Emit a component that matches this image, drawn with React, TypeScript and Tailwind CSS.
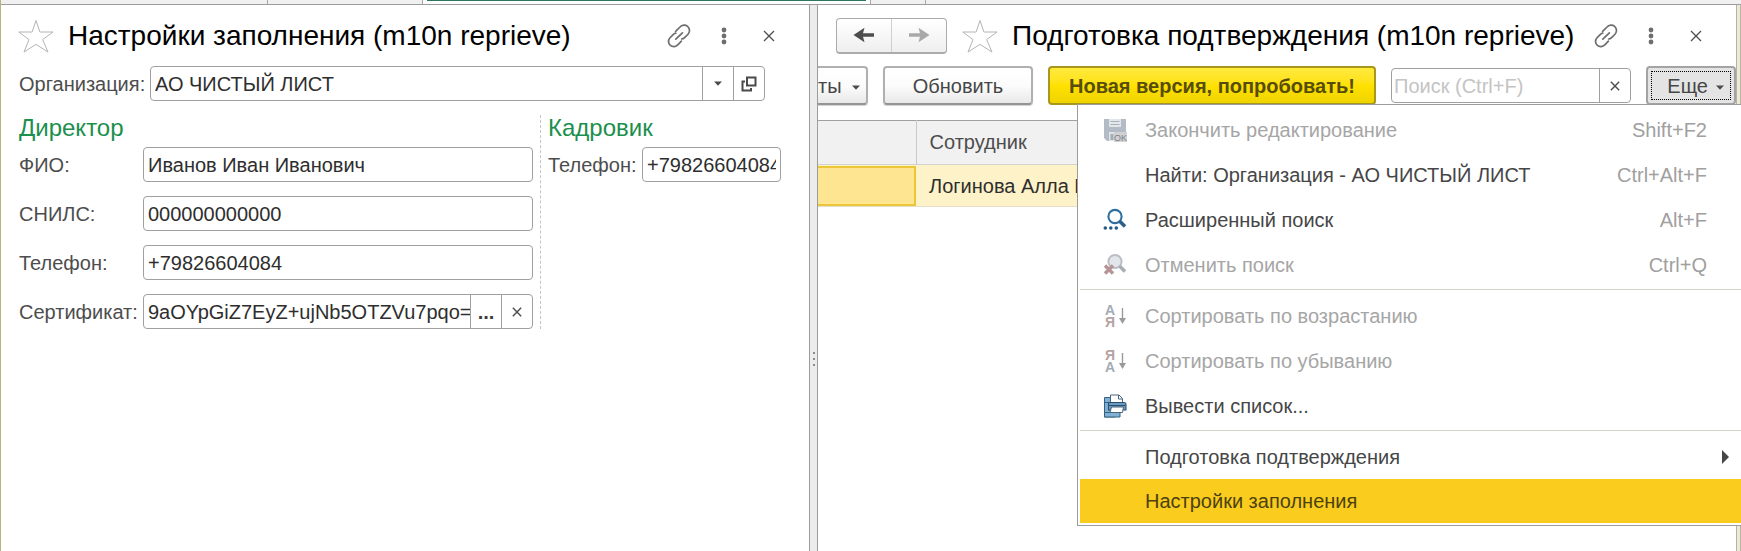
import { useState, type ReactNode } from "react";

const StarIcon = () => (
  <svg className="h-9 w-9 flex-none" viewBox="0 0 36 36" fill="none" stroke="#b4b4b4" strokeWidth="1">
    <path d="M18 2.5 L21.9 14 H35 L24.6 21.6 L30 34 L18 26.4 L6 34 L11 21.6 L0.8 14 H14.1 Z" />
  </svg>
);

const LinkIcon = () => (
  <svg className="h-6 w-6" viewBox="0 0 24 24" fill="none" stroke="#6e6e6e" strokeWidth="1.7" strokeLinecap="round">
    <path d="M8.6 7.4 L13 3 A4.9 4.9 0 0 1 21.2 10 L17.6 13.6 A4.9 4.9 0 0 1 14.6 15" />
    <path d="M14.4 17.2 L10.8 20.8 A4.9 4.9 0 0 1 2.8 14 L6.4 10.4 A4.9 4.9 0 0 1 8.8 9.2" />
    <path d="M8.8 15.2 L15.4 8.8" />
  </svg>
);

const DotsIcon = () => (
  <svg className="h-5 w-5" viewBox="0 0 20 20" fill="#6e6e6e">
    <circle cx="10" cy="4" r="2.4" />
    <circle cx="10" cy="10" r="2.4" />
    <circle cx="10" cy="16" r="2.4" />
  </svg>
);

const CrossIcon = ({ size }: { size: "sm" | "md" }) => (
  <svg
    className={size === "md" ? "h-3 w-3" : "h-[10px] w-[10px]"}
    viewBox="0 0 12 12"
    fill="none"
    stroke="#4d4d4d"
    strokeWidth={size === "md" ? 1.3 : 1.7}
  >
    <path d="M1 1 L11 11 M11 1 L1 11" />
  </svg>
);

const CaretDown = () => (
  <svg className="h-[5px] w-2" viewBox="0 0 8 5" fill="#4a4a4a">
    <path d="M0 0.5 H8 L4 4.8 Z" />
  </svg>
);

const OpenIcon = () => (
  <svg className="h-4 w-4" viewBox="0 0 16 16" fill="none" stroke="#4a4a4a" strokeWidth="2">
    <rect x="6" y="1.5" width="8.5" height="8" />
    <path d="M4 5.5 H1.5 V14.5 H10 V12" />
  </svg>
);

const ArrowIcon = ({ forward }: { forward?: boolean }) => (
  <svg className="h-4 w-[22px]" viewBox="0 0 22 16">
    {forward ? (
      <path d="M1 6.2 H12 L10.5 0.8 L21.5 8 L10.5 15.2 L12 9.8 H1 Z" fill="#a9a9a9" />
    ) : (
      <path d="M21 6.2 H10 L11.5 0.8 L0.5 8 L11.5 15.2 L10 9.8 H21 Z" fill="#4d4d4d" />
    )}
  </svg>
);

const SaveOkIcon = () => (
  <svg className="h-6 w-6 overflow-visible" viewBox="0 0 24 24">
    <path d="M1 1 H23 V23 H4 L1 20 Z" fill="#b3bcc6" />
    <rect x="6" y="1" width="12" height="8" fill="#e3e7ea" />
    <path d="M7.5 3.5 H16.5 M7.5 6.5 H16.5" stroke="#a9b2bb" strokeWidth="1" />
    <rect x="6" y="14" width="7" height="9" fill="#dfe3e6" />
    <rect x="7.5" y="16" width="3" height="6" fill="#a4adb6" />
    <rect x="11" y="14" width="13" height="10" fill="#cfd1d3" />
    <text x="11" y="22.5" fontSize="9" fontFamily="Liberation Sans, sans-serif" fill="#7d8287">OK</text>
  </svg>
);

const SearchDotsIcon = () => (
  <svg className="h-6 w-6" viewBox="0 0 24 24" fill="none">
    <circle cx="12" cy="8.5" r="6.6" stroke="#2f6f9f" strokeWidth="2.1" />
    <path d="M16.5 13 L22 18.5" stroke="#2c5f88" strokeWidth="3.6" />
    <g fill="#235a85">
      <circle cx="2.3" cy="20" r="1.8" />
      <circle cx="7.8" cy="20" r="1.8" />
      <circle cx="13.3" cy="20" r="1.8" />
    </g>
  </svg>
);

const SearchCancelIcon = () => (
  <svg className="h-6 w-6" viewBox="0 0 24 24" fill="none">
    <circle cx="12" cy="8.5" r="6.6" fill="#e2e5e9" stroke="#b9bec5" strokeWidth="2" />
    <path d="M16.5 13 L22 18.5" stroke="#a9aeb4" strokeWidth="3.6" />
    <path d="M2 12.5 L10 20.5 M10 12.5 L2 20.5" stroke="#b49494" strokeWidth="3.4" />
  </svg>
);

const SortIcon = ({ top, bottom }: { top: string; bottom: string }) => (
  <svg className="h-6 w-6 overflow-visible" viewBox="0 0 24 24">
    <g fontFamily="Liberation Sans, sans-serif" fontSize="14" fontWeight="700">
      <text x="2" y="11" fill={top === "А" ? "#a3abb3" : "#b5a3a3"}>{top}</text>
      <text x="2" y="23" fill={bottom === "А" ? "#a3abb3" : "#b5a3a3"}>{bottom}</text>
    </g>
    <path d="M19.5 4 V16" stroke="#9a9a9a" strokeWidth="1.4" />
    <path d="M16 14 H23 L19.5 20 Z" fill="#9a9a9a" />
  </svg>
);

const PrintIcon = () => (
  <svg className="h-6 w-6" viewBox="0 0 24 24" strokeLinejoin="round">
    <path d="M1.5 3.5 H12 V23 H1.5 Z" fill="#7fb0d6" stroke="#35607f" strokeWidth="1" />
    <path d="M1.5 18.5 H17 V23 H1.5 Z" fill="#7fb0d6" stroke="#35607f" strokeWidth="1" />
    <path d="M2 8.5 H6" stroke="#35607f" strokeWidth="1" />
    <path d="M7.5 1 H16 L19.5 4.5 V10 H7.5 Z" fill="#fff" stroke="#4a6478" strokeWidth="1" />
    <path d="M15.5 1 V5 H19.5" fill="none" stroke="#4a6478" strokeWidth="1" />
    <path d="M5.5 8.5 H21 Q23 8.5 23 10.5 V16 H5.5 Z" fill="#6b9cc4" stroke="#2a5070" strokeWidth="1.1" />
    <path d="M6 11.5 H22.5" stroke="#2a5070" strokeWidth="1" />
    <path d="M8.5 13 H20.5 L19.5 18.5 H7 Z" fill="#fff" stroke="#4a6478" strokeWidth="1" />
  </svg>
);

const buttonFace =
  "flex h-[39px] items-center rounded border-2 border-[#b0b0b0] border-b-[#949494] bg-linear-to-b from-white via-[#fcfcfc] to-[#e9e9e9] shadow-[0_1px_1px_#d0d0d0] text-xl text-[#464646]";
const boxFace = "flex h-[35px] min-w-0 overflow-hidden rounded border border-[#a0a0a0] bg-white";
const boxButton = "flex w-[31px] flex-none items-center justify-center border-l border-[#a0a0a0]";
const inputFace = "w-full min-w-0 flex-1 bg-transparent pl-1 text-xl leading-6 text-[#2e2e2e] outline-none";

function WindowTools() {
  return (
    <div className="ml-auto flex flex-none items-center">
      <button aria-label="Получить ссылку" className="flex w-6 justify-center"><LinkIcon /></button>
      <button aria-label="Меню" className="ml-[23px] flex w-5 justify-center"><DotsIcon /></button>
      <button aria-label="Закрыть" className="ml-[29px] flex w-3 justify-center"><CrossIcon size="md" /></button>
    </div>
  );
}

function Field({ id, label, value, children }: { id: string; label: string; value: string; children?: ReactNode }) {
  const [text, setText] = useState(value);
  return (
    <div className="flex items-center">
      <label htmlFor={id} className="w-[124px] flex-none text-xl leading-6 text-[#4d4d4d]">{label}</label>
      <div className={`${boxFace} flex-1`}>
        <input id={id} value={text} onChange={(e) => setText(e.target.value)} className={inputFace} />
        {children}
      </div>
    </div>
  );
}

function SettingsPanel() {
  const [org, setOrg] = useState("АО ЧИСТЫЙ ЛИСТ");
  const [phone, setPhone] = useState("+79826604084");
  return (
    <section className="min-w-0 pl-[18px] pr-7">
      <header className="flex h-[61px] items-center pr-1.5">
        <div className="-ml-px flex"><StarIcon /></div>
        <h1 className="ml-3.5 text-[28px] leading-8 whitespace-nowrap text-black">Настройки заполнения (m10n reprieve)</h1>
        <WindowTools />
      </header>
      <div className="flex items-center pr-4">
        <label htmlFor="org" className="w-[131px] flex-none text-xl leading-6 text-[#4d4d4d]">Организация:</label>
        <div className={`${boxFace} flex-1`}>
          <input id="org" value={org} onChange={(e) => setOrg(e.target.value)} className={inputFace} />
          <button aria-label="Выбрать из списка" className={boxButton}><CaretDown /></button>
          <button aria-label="Открыть" className={boxButton}><OpenIcon /></button>
        </div>
      </div>
      <div className="mt-3.5 flex">
        <div className="min-w-0 flex-1 pr-[7px]">
          <h2 className="h-8 text-2xl leading-[26px] text-[#1b8f4d]">Директор</h2>
          <div className="flex flex-col gap-3.5">
            <Field id="fio" label="ФИО:" value="Иванов Иван Иванович" />
            <Field id="snils" label="СНИЛС:" value="000000000000" />
            <Field id="phone" label="Телефон:" value="+79826604084" />
            <Field id="cert" label="Сертификат:" value="9aOYpGiZ7EyZ+ujNb5OTZVu7pqo=">
              <button aria-label="Выбрать" className={`${boxButton} text-xl font-bold text-[#3c3c3c]`}>...</button>
              <button aria-label="Очистить" className={boxButton}><CrossIcon size="sm" /></button>
            </Field>
          </div>
        </div>
        <div className="w-[241px] flex-none border-l border-dashed border-[#c4c4c4] pl-[7px]">
          <h2 className="h-8 text-2xl leading-[26px] text-[#1b8f4d]">Кадровик</h2>
          <div className="flex items-center">
            <label htmlFor="hr" className="w-[94px] flex-none text-xl leading-6 text-[#4d4d4d]">Телефон:</label>
            <div className={`${boxFace} flex-1 pr-1`}>
              <input id="hr" value={phone} onChange={(e) => setPhone(e.target.value)} className={inputFace} />
            </div>
          </div>
        </div>
      </div>
    </section>
  );
}

function ConfirmPanel() {
  const [query, setQuery] = useState("");
  return (
    <section className="min-w-0 overflow-hidden">
      <header className="flex h-[61px] items-center pl-[18px] pr-[34px]">
        <div className="flex h-9 w-[111px] flex-none rounded border border-[#ababab] border-b-2 bg-linear-to-b from-white to-[#efefef]">
          <button aria-label="Назад" className="flex flex-1 items-center justify-center border-r border-[#cfcfcf]"><ArrowIcon /></button>
          <button aria-label="Вперед" className="flex flex-1 items-center justify-center"><ArrowIcon forward /></button>
        </div>
        <div className="ml-[15px] flex"><StarIcon /></div>
        <h1 className="ml-3.5 text-[28px] leading-8 whitespace-nowrap text-black">Подготовка подтверждения (m10n reprieve)</h1>
        <WindowTools />
      </header>
      <div className="flex items-center gap-[15px]">
        <button className={`${buttonFace} w-[50px] flex-none gap-2.5 rounded-l-none border-l-0`}>
          ты <span className="mt-1"><CaretDown /></span>
        </button>
        <button className={`${buttonFace} w-[150px] flex-none justify-center`}>Обновить</button>
        <button className="flex h-[39px] w-[328px] flex-none items-center justify-center rounded border-2 border-[#a8971a] bg-linear-to-b from-[#ffea3c] via-[#ffe100] to-[#eed300] text-xl font-bold whitespace-nowrap text-[#574d0a]">
          Новая версия, попробовать!
        </button>
        <div className={`${boxFace} flex-1`}>
          <input
            aria-label="Поиск"
            placeholder="Поиск (Ctrl+F)"
            value={query}
            onChange={(e) => setQuery(e.target.value)}
            className="w-full min-w-0 flex-1 bg-transparent px-0.5 text-xl leading-6 text-[#2e2e2e] outline-none placeholder:text-[#c4c4c4]"
          />
          <button aria-label="Очистить поиск" className={boxButton}><CrossIcon size="sm" /></button>
        </div>
        <button
          aria-haspopup="menu"
          aria-expanded="true"
          className="flex h-[39px] w-[90px] flex-none rounded border-2 border-[#a3a3a3] bg-[#e4e4e4] p-[3px] text-xl text-[#464646]"
        >
          <span className="flex h-full w-full items-center justify-end gap-2 border border-dotted border-black pr-1.5">
            Еще <span className="mt-1"><CaretDown /></span>
          </span>
        </button>
      </div>
      <table className="mt-[15px] w-full table-fixed border-collapse border-t border-[#a0a0a0] text-left text-xl">
        <thead>
          <tr className="h-11 border-b border-[#d2d2d2] bg-[#f1f1f1]">
            <th className="w-[98px] border-r border-[#c8c8c8]" aria-label="Номер" />
            <th className="pb-0.5 pl-[13px] font-normal text-[#4d4d4d]">Сотрудник</th>
          </tr>
        </thead>
        <tbody>
          <tr className="h-[42px] border-b border-[#e6e0c8] bg-[#fdf2c8]">
            <td className="p-0 pt-px"><div className="h-10 border-2 border-l-0 border-[#ecc638] bg-[#fee591]" /></td>
            <td className="pl-[13px] text-[#2e2e2e]">Логинова Алла В</td>
          </tr>
        </tbody>
      </table>
    </section>
  );
}

type ItemProps = { icon?: ReactNode; label: string; hint?: string; disabled?: boolean; submenu?: boolean; active?: boolean };

function MenuItem({ icon, label, hint, disabled, submenu, active }: ItemProps) {
  return (
    <button
      role="menuitem"
      disabled={disabled}
      className={`flex w-full items-center pl-[23px] text-xl leading-6 ${active ? "h-11 bg-[#facc1e] text-[#4c4210]" : "h-[45px]"} ${
        disabled ? "text-[#a6a6a6]" : active ? "" : "text-[#464646]"
      }`}
    >
      <span className="flex w-[42px] flex-none">{icon}</span>
      <span className="whitespace-nowrap">{label}</span>
      {hint && <span className="ml-auto pr-[34px] text-[#a0a0a0]">{hint}</span>}
      {submenu && (
        <svg className="mr-3 ml-auto h-3.5 w-[7px]" viewBox="0 0 7 14" fill="#464646">
          <path d="M0 0 L7 7 L0 14 Z" />
        </svg>
      )}
    </button>
  );
}

const Separator = () => <div role="separator" className="mt-0.5 mb-[3px] h-px bg-[#d3d3c6]" />;

function MoreMenu() {
  return (
    <div
      role="menu"
      className="absolute top-[104px] right-0 w-[664px] border border-r-0 border-[#9c9c9c] bg-white pt-0.5 pb-0.5 pl-0.5"
    >
      <MenuItem icon={<SaveOkIcon />} label="Закончить редактирование" hint="Shift+F2" disabled />
      <MenuItem label="Найти: Организация - АО ЧИСТЫЙ ЛИСТ" hint="Ctrl+Alt+F" />
      <MenuItem icon={<SearchDotsIcon />} label="Расширенный поиск" hint="Alt+F" />
      <MenuItem icon={<SearchCancelIcon />} label="Отменить поиск" hint="Ctrl+Q" disabled />
      <Separator />
      <MenuItem icon={<SortIcon top="А" bottom="Я" />} label="Сортировать по возрастанию" disabled />
      <MenuItem icon={<SortIcon top="Я" bottom="А" />} label="Сортировать по убыванию" disabled />
      <MenuItem icon={<PrintIcon />} label="Вывести список..." />
      <Separator />
      <MenuItem label="Подготовка подтверждения" submenu />
      <MenuItem label="Настройки заполнения" active />
    </div>
  );
}

export default function App() {
  return (
    <div className="relative flex min-h-screen flex-col overflow-hidden border-l border-[#b9b384] bg-white font-['Liberation_Sans',Arial,sans-serif]">
      <div className="flex h-[5px] flex-none border-b border-[#9c9c9c] bg-[#f0f0f0]">
        <div className="w-[267px] flex-none border-r border-[#a8a8a8]" />
        <div className="w-[155px] flex-none border-r border-[#a8a8a8]" />
        <div className="w-[448px] flex-none border-r border-[#a8a8a8] bg-white px-1">
          <div className="h-px bg-[#2f7559]" />
        </div>
        <div className="w-[55px] flex-none border-r border-[#a8a8a8]" />
      </div>
      <main className="grid flex-1 grid-cols-[808fr_9px_918fr_5px]">
        <SettingsPanel />
        <div role="separator" aria-orientation="vertical" className="flex flex-col items-center gap-1 border-x border-[#9c9c9c] bg-[#ececec] pt-[347px]">
          <span className="h-0.5 w-0.5 bg-[#8c8c8c]" />
          <span className="h-0.5 w-0.5 bg-[#8c8c8c]" />
          <span className="h-0.5 w-0.5 bg-[#8c8c8c]" />
        </div>
        <ConfirmPanel />
        <div className="border-x border-[#b5b3a2] bg-[#ece9da]" />
      </main>
      <MoreMenu />
    </div>
  );
}
